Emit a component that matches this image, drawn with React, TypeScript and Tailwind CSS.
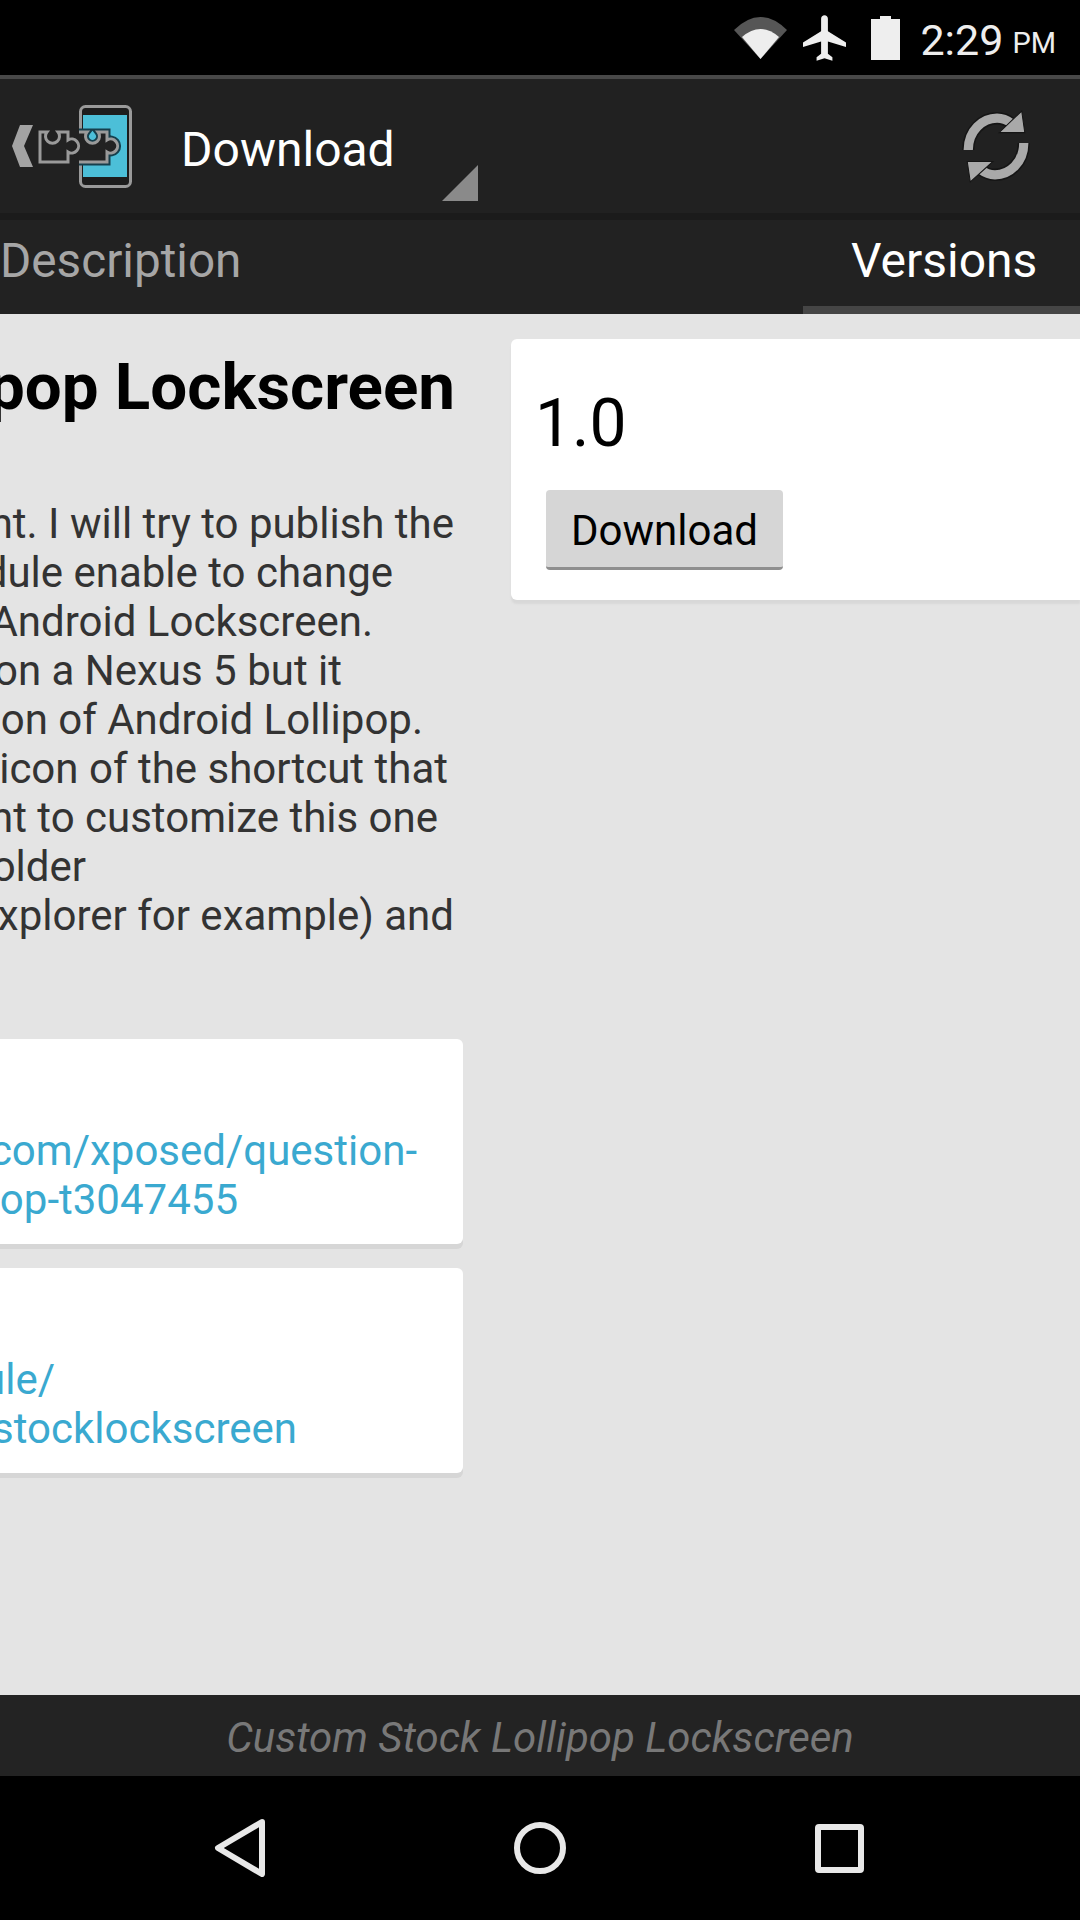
/**
 * Xposed module page, Versions tab mid-swipe
 */

const bodyLines = [
  { text: 'ent. I will try to publish the', pad: 'pr-[9px]' },
  { text: 'odule enable to change', pad: 'pr-[70px]' },
  { text: 'Android Lockscreen.', pad: 'pr-[90px]' },
  { text: 'on a Nexus 5 but it', pad: 'pr-[121px]' },
  { text: 'version of Android Lollipop.', pad: 'pr-[40px]' },
  { text: 'icon of the shortcut that', pad: 'pr-[15px]' },
  { text: 'want to customize this one', pad: 'pr-[25px]' },
  { text: 'folder', pad: 'pr-[377px]' },
  { text: 'explorer for example) and', pad: 'pr-[9px]' },
];

function WifiIcon() {
  return (
    <svg width="54" height="44" viewBox="0 0 54 44">
      <path d="M26.5 43 L0 14 Q26.5 -12 53 14 Z" fill="#565656" />
      <path d="M26.5 43 L8 21 Q26.5 5 45 21 Z" fill="#eeeeee" />
    </svg>
  );
}

function PlaneIcon() {
  return (
    <svg width="43" height="46" viewBox="2 2 19 20">
      <path
        d="M21 16v-2l-8-5V3.5c0-.83-.67-1.5-1.5-1.5S10 2.67 10 3.5V9l-8 5v2l8-2.5V19l-2 1.5V22l3.5-1 3.5 1v-1.5L13 19v-5.5l8 2.5z"
        fill="#eeeeee"
      />
    </svg>
  );
}

function BatteryIcon() {
  return (
    <svg width="29" height="44" viewBox="0 0 29 44">
      <path d="M9 0 H20 V3 H29 V44 H0 V3 H9 Z" fill="#eeeeee" />
    </svg>
  );
}

function XposedLogo() {
  const rightPiece = 'M79 32 H87 A7 7 0 1 0 98 32 H107 V40 A7 7 0 1 1 107 52 V62 H79';
  return (
    <svg width="140" height="92" viewBox="0 0 140 92" className="shrink-0">
      <polygon points="33,25 20,25 12,46 20,67 33,67 24,46" fill="#a3a3a3" />
      <rect x="80.5" y="6.5" width="50" height="80" rx="5" fill="#1d1d1d" stroke="#9a9a9a" strokeWidth="3" />
      <rect x="83" y="15" width="44" height="62" fill="#4cbfd8" />
      <path d={rightPiece} fill="#222222" stroke="#163f4c" strokeWidth="7" />
      <path d={rightPiece} fill="#222222" stroke="#9a9a9a" strokeWidth="3" />
      <path
        d="M40 32 H47 A7 7 0 1 0 58 32 H68 V40 A7 7 0 1 1 68 52 V62 H40 Z"
        fill="#222222"
        stroke="#9a9a9a"
        strokeWidth="3"
      />
    </svg>
  );
}

function SyncIcon() {
  return (
    <svg width="68" height="73" viewBox="0 0 66 71">
      <g fill="none">
        <path d="M6 39 C6 20 20 8 34 8 C39 8 44 10 48 13" stroke="#151515" strokeWidth="12" />
        <path d="M60 32 C60 51 46 63 32 63 C27 63 22 61 18 58" stroke="#151515" strokeWidth="12" />
        <path d="M6 39 C6 20 20 8 34 8 C39 8 44 10 48 13" stroke="#a9a9a9" strokeWidth="9" />
        <path d="M60 32 C60 51 46 63 32 63 C27 63 22 61 18 58" stroke="#a9a9a9" strokeWidth="9" />
      </g>
      <polygon points="58,1 61,22 36,22" fill="#a9a9a9" stroke="#151515" strokeWidth="1" />
      <polygon points="8,70 5,50 30,50" fill="#a9a9a9" stroke="#151515" strokeWidth="1" />
    </svg>
  );
}

function LinkCard({ first, second, firstPad, secondPad }: { first: string; second: string; firstPad: string; secondPad: string }) {
  return (
    <div className="h-[205px] bg-white rounded-r-md shadow-[0_5px_0_#d6d6d6] flex flex-col items-end justify-end pb-[20px] overflow-hidden whitespace-nowrap text-[42px] leading-[49px] text-[#3aa9d0]">
      <div className={firstPad}>{first}</div>
      <div className={secondPad}>{second}</div>
    </div>
  );
}

export default function App() {
  return (
    <div className="w-[1080px] h-[1920px] flex flex-col overflow-hidden bg-black font-['Roboto',sans-serif]">
      {/* status bar */}
      <div className="h-[75px] shrink-0 flex items-center justify-end pr-[24px] text-[#eeeeee]">
        <WifiIcon />
        <div className="ml-[15px]"><PlaneIcon /></div>
        <div className="ml-[25px]"><BatteryIcon /></div>
        <div className="ml-[20px] mt-[4px] text-[43px] leading-[50px]">2:29</div>
        <div className="ml-[9px] mt-[10px] text-[29px] leading-[34px]">PM</div>
      </div>
      <div className="h-[4px] shrink-0 bg-[#484848]" />

      {/* action bar */}
      <div className="h-[134px] shrink-0 bg-[#212121] flex items-center">
        <XposedLogo />
        <div className="ml-[41px] mt-[8px] w-[261px] text-[48px] leading-[56px] text-white">Download</div>
        <svg width="36" height="36" viewBox="0 0 36 36" className="self-end mb-[12px]">
          <polygon points="0,36 36,0 36,36" fill="#8a8a8a" />
        </svg>
        <div className="ml-auto mr-[50px]"><SyncIcon /></div>
      </div>
      <div className="h-[7px] shrink-0 bg-[#1b1b1b]" />

      {/* tabs */}
      <div className="h-[94px] shrink-0 bg-[#222222] flex justify-between text-[48px] leading-[56px]">
        <div className="pt-[13px] text-[47.7px] text-[#a6a6a6]">Description</div>
        <div className="w-[277px] pl-[48px] pt-[13px] text-white border-b-[8px] border-[#454545]">Versions</div>
      </div>

      {/* pager */}
      <div className="flex-1 min-h-0 bg-[#e4e4e4] flex overflow-hidden">
        <div className="w-[463px] shrink-0 flex flex-col items-stretch">
          <div className="flex justify-end pr-[8px] mt-[34px] overflow-hidden whitespace-nowrap text-[65.5px] leading-[77px] font-bold text-black">
            Lollipop Lockscreen
          </div>
          <div className="mt-[74px] flex flex-col items-end overflow-hidden whitespace-nowrap text-[42px] leading-[49px] text-[#333333]">
            {bodyLines.map((line) => (
              <div key={line.text} className={line.pad}>{line.text}</div>
            ))}
          </div>
          <div className="mt-[99px] flex flex-col gap-[24px]">
            <LinkCard
              first="m.com/xposed/question-"
              second="lollipop-t3047455"
              firstPad="pr-[46px]"
              secondPad="pr-[225px]"
            />
            <LinkCard
              first="module/"
              second="stocklockscreen"
              firstPad="pr-[408px]"
              secondPad="pr-[166px]"
            />
          </div>
        </div>

        <div className="flex-1 ml-[48px] mt-[25px] h-[261px] bg-white rounded-l-md shadow-[0_4px_2px_#d8d8d8] pl-[24px] pt-[46px]">
          <div className="text-[66px] leading-[77px] text-black">1.0</div>
          <button className="mt-[28px] ml-[11px] w-[237px] h-[80px] pt-[4px] rounded-[4px] bg-[#d6d6d6] border-b-[3px] border-[#8f8f8f] text-[42px] leading-[49px] text-black">
            Download
          </button>
        </div>
      </div>

      {/* module name footer */}
      <div className="h-[81px] shrink-0 bg-[#232323] flex items-center justify-center pt-[3px] text-[42px] italic text-[#787878]">
        Custom Stock Lollipop Lockscreen
      </div>

      {/* nav bar */}
      <div className="h-[144px] shrink-0 bg-black flex items-center">
        <svg width="52" height="58" viewBox="0 0 52 58" className="ml-[214px] shrink-0">
          <path d="M48 3 L4 29 L48 55 Z" fill="none" stroke="#e8e8e8" strokeWidth="6" strokeLinejoin="round" />
        </svg>
        <div className="ml-[248px] w-[52px] h-[52px] shrink-0 rounded-full border-[6px] border-[#e8e8e8]" />
        <div className="ml-[249px] w-[49px] h-[49px] shrink-0 rounded-[4px] border-[6px] border-[#e8e8e8]" />
      </div>
    </div>
  );
}
